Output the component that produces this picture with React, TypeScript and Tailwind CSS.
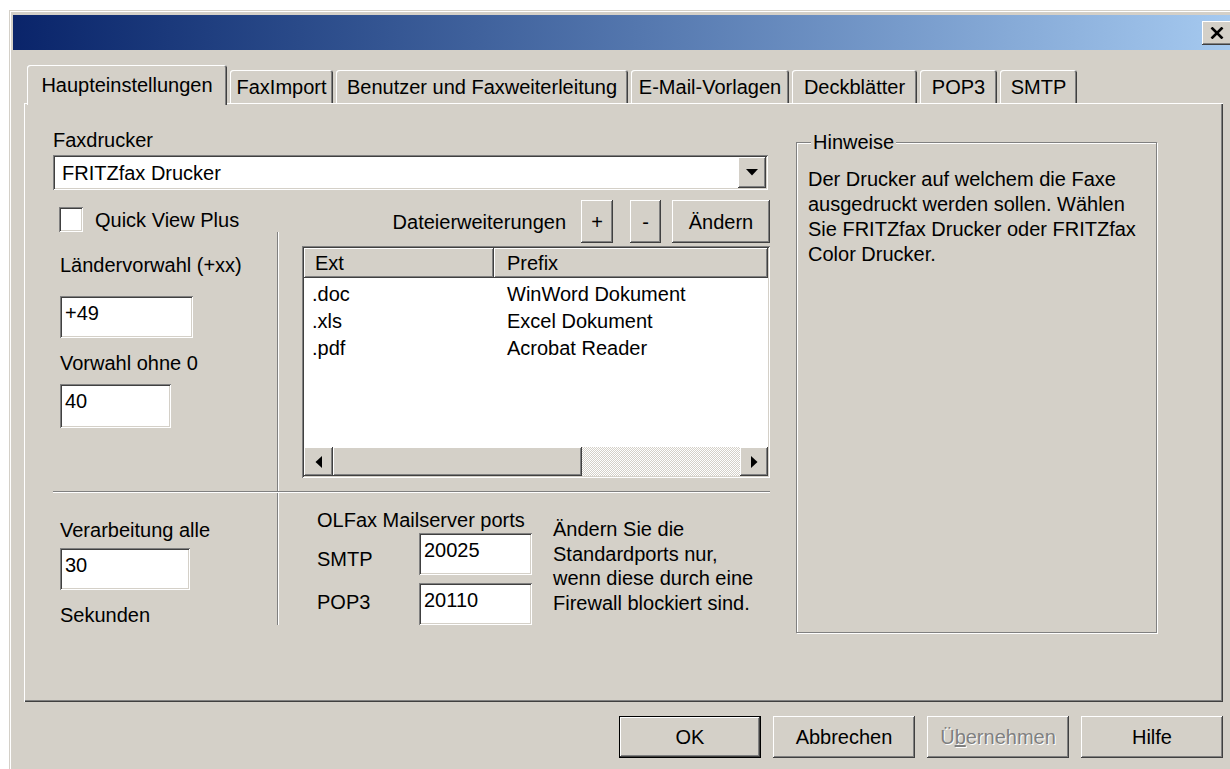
import type { ReactNode } from 'react'

// classic 3D edges
const raised =
  'shadow-[inset_-1px_-1px_0_#404040,inset_1px_1px_0_#ffffff,inset_-2px_-2px_0_#808080,inset_2px_2px_0_#d4d0c8]'
const sunken =
  'shadow-[inset_1px_1px_0_#808080,inset_-1px_-1px_0_#ffffff,inset_2px_2px_0_#404040,inset_-2px_-2px_0_#d4d0c8]'

const tabs = [
  { label: 'Haupteinstellungen', w: 'w-[200px]' },
  { label: 'FaxImport', w: 'w-[103px]' },
  { label: 'Benutzer und Faxweiterleitung', w: 'w-[292px]' },
  { label: 'E-Mail-Vorlagen', w: 'w-[158px]' },
  { label: 'Deckblätter', w: 'w-[125px]' },
  { label: 'POP3', w: 'w-[77px]' },
  { label: 'SMTP', w: 'w-[77px]' },
]

const extensions = [
  { ext: '.doc', prefix: 'WinWord Dokument' },
  { ext: '.xls', prefix: 'Excel Dokument' },
  { ext: '.pdf', prefix: 'Acrobat Reader' },
]

function Btn({ children, className = '' }: { children: ReactNode; className?: string }) {
  return (
    <div className={`flex items-center justify-center bg-[#d4d0c8] ${raised} ${className}`}>{children}</div>
  )
}

function Field({ value, className = '' }: { value: string; className?: string }) {
  return <div className={`bg-white pl-[5px] pt-[5px] ${sunken} ${className}`}>{value}</div>
}

function Arrow({ dir }: { dir: 'left' | 'right' | 'down' }) {
  if (dir === 'down')
    return (
      <svg width="12" height="7" viewBox="0 0 12 7">
        <polygon points="0,0 12,0 6,6.5" fill="#000" />
      </svg>
    )
  return (
    <svg width="7" height="12" viewBox="0 0 7 12">
      <polygon points={dir === 'left' ? '7,0 7,12 0.5,6' : '0,0 0,12 6.5,6'} fill="#000" />
    </svg>
  )
}

function VSep({ className = '' }: { className?: string }) {
  return <div className={`w-[2px] shrink-0 border-l border-l-[#808080] bg-white ${className}`} />
}

export default function App() {
  return (
    <div className="h-[769px] w-[1230px] overflow-hidden bg-white font-['Liberation_Sans',Arial,sans-serif] text-[20px] leading-[24px] text-black">
      <div className="ml-[9px] mt-[10px] h-[800px] w-[1229px] bg-[#d4d0c8] px-[4px] pt-[5px] shadow-[inset_1px_1px_0_#d4d0c8,inset_2px_2px_0_#ffffff]">
        {/* caption bar */}
        <div className="flex h-[35px] items-start justify-end bg-gradient-to-r from-[#0a246a] to-[#a6caf0] pr-[2px] pt-[6px]">
          <div className={`flex h-[24px] w-[30px] items-center justify-center bg-[#d4d0c8] ${raised}`}>
            <svg width="14" height="12" viewBox="0 0 14 12">
              <path d="M1.5 0.5 L12.5 11.5 M12.5 0.5 L1.5 11.5" stroke="#000" strokeWidth="2.6" />
            </svg>
          </div>
        </div>

        <div className="ml-[11px] w-[1199px]">
          {/* tab strip */}
          <div className="mt-[15px] flex h-[38px] items-end gap-[3px] pl-[3px]">
            {tabs.map((t, i) =>
              i === 0 ? (
                <div
                  key={t.label}
                  className={`relative z-10 -mb-[2px] h-[40px] ${t.w} rounded-t-[3px] bg-[#d4d0c8] pt-[8px] text-center shadow-[inset_1px_1px_0_#ffffff,inset_-1px_0_0_#404040,inset_-2px_0_0_#808080]`}
                >
                  {t.label}
                </div>
              ) : (
                <div
                  key={t.label}
                  className={`h-[33px] ${t.w} rounded-t-[3px] bg-[#d4d0c8] pt-[5px] text-center shadow-[inset_1px_1px_0_#ffffff,inset_-1px_0_0_#404040,inset_-2px_0_0_#808080]`}
                >
                  {t.label}
                </div>
              )
            )}
          </div>

          {/* tab page */}
          <div className="flex h-[599px] gap-[24px] bg-[#d4d0c8] pl-[29px] pt-[25px] shadow-[inset_1px_1px_0_#ffffff,inset_-1px_-1px_0_#404040,inset_-2px_-2px_0_#808080]">
            <div className="w-[719px] shrink-0">
              <div>Faxdrucker</div>
              <div className={`mt-[3px] flex h-[35px] w-[715px] items-start justify-between bg-white p-[2px] ${sunken}`}>
                <span className="pl-[7px] pt-[4px]">FRITZfax Drucker</span>
                <Btn className="h-[31px] w-[28px]">
                  <Arrow dir="down" />
                </Btn>
              </div>

              {/* printer options and extension list */}
              <div className="mt-[10px] flex h-[291px]">
                <div className="w-[224px] shrink-0 pl-[6px]">
                  <div className="mt-[7px] flex h-[25px] items-center gap-[12px]">
                    <div className={`h-[25px] w-[24px] bg-white ${sunken}`} />
                    <span>Quick View Plus</span>
                  </div>
                  <div className="ml-[1px] mt-[21px]">Ländervorwahl (+xx)</div>
                  <Field value="+49" className="ml-[1px] mt-[19px] h-[42px] w-[133px]" />
                  <div className="ml-[1px] mt-[13px]">Vorwahl ohne 0</div>
                  <Field value="40" className="ml-[1px] mt-[9px] h-[44px] w-[111px]" />
                </div>
                <VSep className="mt-[32px]" />
                <div className="flex-1">
                  <div className="flex h-[43px] items-center justify-end pr-[2px]">
                    <span className="mr-[15px]">Dateierweiterungen</span>
                    <Btn className="h-[43px] w-[32px]">+</Btn>
                    <Btn className="ml-[17px] h-[43px] w-[31px]">-</Btn>
                    <Btn className="ml-[11px] h-[43px] w-[98px]">Ändern</Btn>
                  </div>
                  <div className={`ml-[23px] mt-[3px] flex h-[232px] w-[468px] flex-col bg-white p-[2px] ${sunken}`}>
                    <div className="flex h-[30px] shrink-0">
                      <div className={`w-[190px] bg-[#d4d0c8] pl-[11px] pt-[3px] ${raised}`}>Ext</div>
                      <div className={`flex-1 bg-[#d4d0c8] pl-[13px] pt-[3px] ${raised}`}>Prefix</div>
                    </div>
                    <div className="flex-1 pt-[2px]">
                      {extensions.map((r) => (
                        <div key={r.ext} className="flex h-[27px] items-center">
                          <span className="w-[190px] pl-[8px]">{r.ext}</span>
                          <span className="pl-[13px]">{r.prefix}</span>
                        </div>
                      ))}
                    </div>
                    <div className="flex h-[29px] shrink-0">
                      <Btn className="w-[29px]">
                        <Arrow dir="left" />
                      </Btn>
                      <Btn className="w-[249px]">{null}</Btn>
                      <div className="flex-1 bg-[image:repeating-conic-gradient(#ffffff_0%_25%,#d4d0c8_0%_50%)] bg-[length:2px_2px]" />
                      <Btn className="w-[28px]">
                        <Arrow dir="right" />
                      </Btn>
                    </div>
                  </div>
                </div>
              </div>

              <div className="h-[2px] w-[717px] border-t border-t-[#808080] bg-white" />

              {/* polling interval and mail server ports */}
              <div className="flex h-[132px]">
                <div className="w-[224px] shrink-0 pl-[7px]">
                  <div className="mt-[25px]">Verarbeitung alle</div>
                  <Field value="30" className="mt-[6px] h-[42px] w-[130px]" />
                  <div className="mt-[13px]">Sekunden</div>
                </div>
                <VSep />
                <div className="flex flex-1 pl-[38px]">
                  <div className="w-[215px] shrink-0">
                    <div className="mt-[15px]">OLFax Mailserver ports</div>
                    <div className="mt-[1px] flex">
                      <span className="w-[102px] pt-[14px]">SMTP</span>
                      <Field value="20025" className="h-[42px] w-[113px]" />
                    </div>
                    <div className="mt-[8px] flex">
                      <span className="w-[102px] pt-[7px]">POP3</span>
                      <Field value="20110" className="h-[42px] w-[113px]" />
                    </div>
                  </div>
                  <div className="ml-[21px] mt-[24px] leading-[24.5px]">
                    <div>Ändern Sie die</div>
                    <div>Standardports nur,</div>
                    <div>wenn diese durch eine</div>
                    <div>Firewall blockiert sind.</div>
                  </div>
                </div>
              </div>
            </div>

            <fieldset className="mt-[2px] h-[503px] w-[361px] shrink-0 border border-[#808080] shadow-[inset_1px_1px_0_#ffffff,1px_1px_0_#ffffff]">
              <legend className="ml-[14px] bg-[#d4d0c8] px-[2px]">Hinweise</legend>
              <div className="pl-[11px] pt-[13px] leading-[25px]">
                <div>Der Drucker auf welchem die Faxe</div>
                <div>ausgedruckt werden sollen. Wählen</div>
                <div>Sie FRITZfax Drucker oder FRITZfax</div>
                <div>Color Drucker.</div>
              </div>
            </fieldset>
          </div>

          {/* dialog buttons */}
          <div className="mt-[14px] flex justify-end gap-[12px]">
            <div className="h-[42px] w-[142px] border border-black">
              <Btn className="h-full w-full">OK</Btn>
            </div>
            <Btn className="h-[42px] w-[142px]">Abbrechen</Btn>
            <Btn className="h-[42px] w-[142px] text-[#808080] [text-shadow:1px_1px_0_#ffffff]">
              <span>
                Ü<span className="underline">b</span>ernehmen
              </span>
            </Btn>
            <Btn className="h-[42px] w-[142px]">Hilfe</Btn>
          </div>
        </div>
      </div>
    </div>
  )
}
